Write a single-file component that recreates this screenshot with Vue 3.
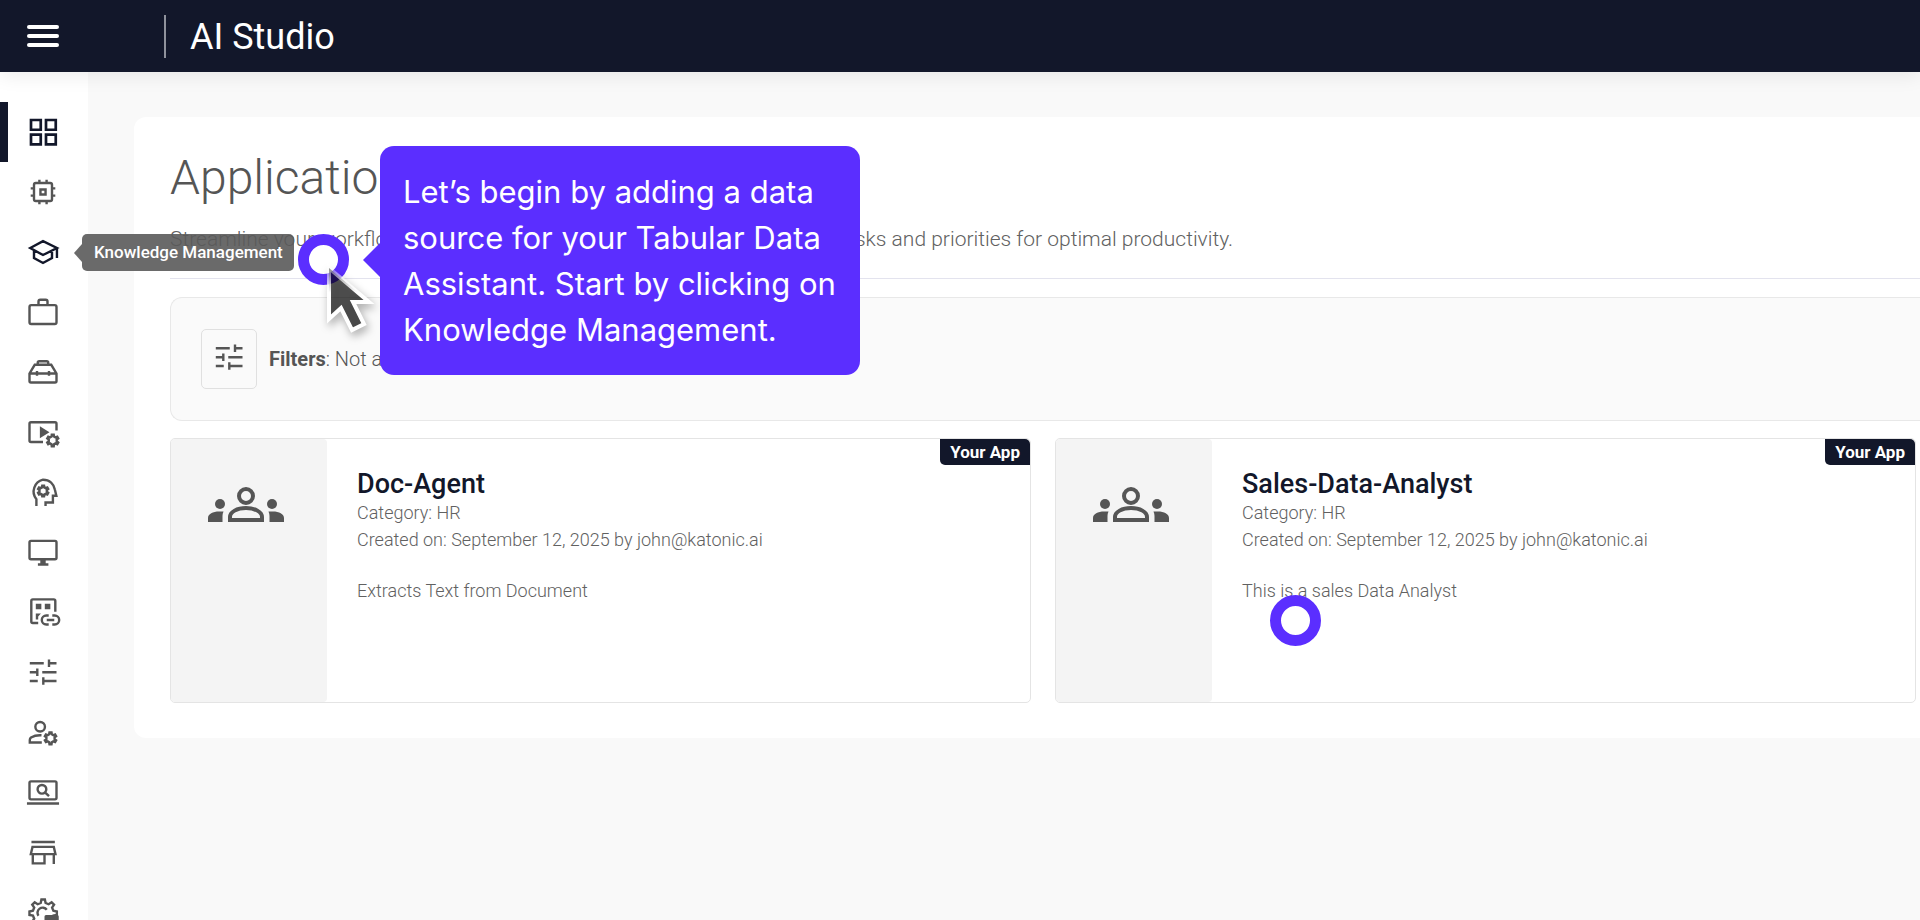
<template>
  <div class="shell">
    <header class="topbar">
      <button class="menu-btn" type="button" aria-label="Menu">
        <span></span>
        <span></span>
        <span></span>
      </button>
      <div class="brand">AI Studio</div>
    </header>

    <div class="body">
      <nav class="sidebar" aria-label="Main">
        <a
          v-for="item in navItems"
          :key="item.label"
          href="#"
          class="nav-item"
          :class="{ active: item.active, hovered: item.hovered }"
          :aria-label="item.label"
        >
          <svg class="nav-icon" viewBox="0 0 24 24">
            <path class="line" :d="item.line" />
            <path v-if="item.solid" class="solid" :d="item.solid" />
          </svg>
          <span v-if="item.hovered" class="tooltip">{{ item.label }}</span>
        </a>
      </nav>

      <main class="content">
        <section class="panel">
          <div class="panel-head">
            <h1>Applications</h1>
            <p>
              Streamline your workflow by efficiently managing and organizing
              all your tasks and priorities for optimal productivity.
            </p>
          </div>

          <div class="filters">
            <button class="filter-btn" type="button" aria-label="Filters">
              <svg class="filter-icon" viewBox="0 0 24 24">
                <path class="line" :d="tuneIcon" />
              </svg>
            </button>
            <span><b>Filters</b>: Not applied</span>
          </div>

          <div class="cards">
            <article v-for="app in apps" :key="app.name" class="card">
              <div class="thumb">
                <svg class="people" viewBox="0 0 76 36">
                  <circle class="ring-line" cx="38" cy="9" r="7" />
                  <path
                    class="ring-line"
                    d="M22 33v-3c0-5 7-9 16-9s16 4 16 9v3z"
                  />
                  <circle cx="12" cy="17" r="5" />
                  <circle cx="64" cy="17" r="5" />
                  <path d="M0 35v-4c0-4 5-6.500 11-6.500h4.500c-.7 1.500-1 3-1 4.500v6z" />
                  <path d="M76 35v-4c0-4-5-6.500-11-6.500h-4.500c.7 1.500 1 3 1 4.500v6z" />
                </svg>
              </div>
              <div class="card-body">
                <h2>{{ app.name }}</h2>
                <p>Category: {{ app.category }}</p>
                <p>Created on: {{ app.created }} by {{ app.author }}</p>
                <p class="desc">{{ app.description }}</p>
              </div>
              <span class="badge">Your App</span>
            </article>
          </div>
        </section>
      </main>
    </div>

    <!-- Guided tour -->
    <div class="hotspot hotspot-nav"></div>
    <div class="hotspot hotspot-card"></div>
    <svg class="cursor" viewBox="0 0 60 90">
      <defs>
        <linearGradient id="edge" x1="0" y1="0" x2="0" y2="1">
          <stop offset="0" stop-color="#fff" stop-opacity="0.3" />
          <stop offset="0.4" stop-color="#fff" />
        </linearGradient>
      </defs>
      <path
        d="M9 10v51l12-11 11 22 12-6-11-22h16z"
        fill="#000"
        fill-opacity="0.62"
        stroke="url(#edge)"
        stroke-width="4"
      />
    </svg>
    <div class="bubble" role="dialog" aria-label="Tour step">
      Let’s begin by adding a data source for your Tabular Data Assistant. Start
      by clicking on Knowledge Management.
    </div>
  </div>
</template>

<script setup>
// outline of a cog: each tooth is a flat top between two valley points
const cog = (cx, cy, outer, inner, teeth) => {
  const step = (Math.PI * 2) / teeth;
  const points = [];
  for (let i = 0; i < teeth; i++) {
    const mid = i * step - Math.PI / 2;
    [
      [-0.3, inner],
      [-0.16, outer],
      [0.16, outer],
      [0.3, inner],
    ].forEach(([turn, r]) => {
      const a = mid + turn * step;
      points.push(
        `${(cx + Math.cos(a) * r).toFixed(2)} ${(cy + Math.sin(a) * r).toFixed(2)}`
      );
    });
  }
  return `M${points.join("L")}z`;
};

const tuneIcon =
  "M3.200 6.200h9.300M16 3.700v5M16 6.200h5M3.200 12.200h5M8.200 9.700v5M11.500 12.200H21M3.200 18h5.300M12.200 15.500v5M12.200 18H21";

const navItems = [
  {
    label: "Applications",
    active: true,
    line: "M4 4h6.500v6.500H4zM14 4h6.500v6.500H14zM4 13.800h6.500v6.500H4zM14 13.800h6.500v6.500H14z",
  },
  {
    label: "Models",
    line: "M7.200 6h9.600q1.200 0 1.200 1.200v9.600q0 1.200-1.200 1.200H7.200Q6 18 6 16.800V7.200Q6 6 7.200 6zM10.300 10.300h3.400v3.400h-3.400zM9.600 3.800V6M14.400 3.800V6M9.600 18v2.200M14.400 18v2.200M3.800 9.600H6M3.800 14.400H6M18 9.600h2.200M18 14.400h2.200",
  },
  {
    label: "Knowledge Management",
    hovered: true,
    line: "M3.500 9.300L12 4.800l9.300 4.500L12 14zM6 11v5l6 3.300 6-3.300v-5M21.300 9.300V16",
  },
  {
    label: "Projects",
    line: "M4.200 7.400h15.600q1.200 0 1.200 1.200v10.200q0 1.200-1.200 1.200H4.200Q3 20 3 18.800V8.600q0-1.200 1.200-1.200zM9 7.400V5q0-1.200 1.200-1.200h3.600Q15 3.800 15 5v2.400",
  },
  {
    label: "Toolbox",
    line: "M6.500 7.200h11L21 13v5q0 1-1 1H4q-1 0-1-1v-5zM8.500 7.200V5.800q0-1 1-1h5q1 0 1 1v1.400M3 13h18M8 11.300v3.200M16 11.300v3.200",
  },
  {
    label: "Workflows",
    line: `M21 11V6.500q0-1-1-1H4q-1 0-1 1v11.200q0 1 1 1h8${cog(18.5, 17.600, 3.900, 2.700, 6)}`,
    solid: "M9.900 8.200v8l6.400-4z",
  },
  {
    label: "Intelligence",
    line: `M7.600 21.300v-4.500A8.100 8.100 0 0 1 12 3.800c4.600 0 7.200 3 7.900 6.600l1 4.100h-2.300V19h-4.900v2.300${cog(12.1, 11.300, 3.600, 2.500, 6)}`,
  },
  {
    label: "Workspaces",
    line: "M4 4.600h16q1 0 1 1v10.200q0 1-1 1H4q-1 0-1-1V5.600q0-1 1-1zM8.600 20.300h7",
    solid: "M10.200 17h3.600v3.500h-3.600z",
  },
  {
    label: "Connectors",
    line: "M8.800 19.300H5.200q-1 0-1-1V4.600q0-1 1-1h14q1 0 1 1v7.200M15.800 14.300h-1.600a3 3 0 0 0 0 6h1.600M18.200 14.300h1.600a3 3 0 0 1 0 6h-1.600M14.500 17.300h5",
    solid: "M7.200 6.500h3.700v3.700H7.200zM13.200 6.500h3.700v3.700h-3.700zM7.200 13h3.400l-1.800 2v2H7.200z",
  },
  { label: "Settings", line: tuneIcon },
  {
    label: "User Management",
    line: `M13.300 8.500a3.200 3.200 0 1 1-6.400 0a3.200 3.200 0 1 1 6.400 0zM11 14.200c-3.300-.2-5.500.6-7 1.500q-.8.600-.8 1.600V19h8${cog(17, 16.200, 4, 2.800, 6)}`,
  },
  {
    label: "Monitoring",
    line: "M4 4.900h16q1 0 1 1v10q0 1-1 1H4q-1 0-1-1v-10q0-1 1-1zM1.300 19.700h21.400M14.200 10.200a2.900 2.900 0 1 1-5.800 0a2.900 2.900 0 1 1 5.800 0zM13.300 12.200l2.700 2.600",
  },
  {
    label: "Marketplace",
    line: "M4.300 5.300h15.600M5 8.600h14.200l1.100 4.800H3.900zM5.200 13.400v6.200h7.800v-6.200M19.200 13.400v6.600",
  },
  {
    label: "Administration",
    line: `${cog(12.1, 12.800, 9.200, 7, 8)}M9 14.500a3.300 3.300 0 0 1 5.500-4`,
    solid:
      "M14 14h7.500q1 0 1 1v8.500h-2.500v-5.500h-4v5.500H13V15q0-1 1-1z",
  },
];

const apps = [
  {
    name: "Doc-Agent",
    category: "HR",
    created: "September 12, 2025",
    author: "john@katonic.ai",
    description: "Extracts Text from Document",
  },
  {
    name: "Sales-Data-Analyst",
    category: "HR",
    created: "September 12, 2025",
    author: "john@katonic.ai",
    description: "This is a sales Data Analyst",
  },
];
</script>

<style>
body {
  margin: 0;
  background: #f9f9f9;
}
</style>

<style scoped>
.shell {
  position: relative;
  display: flex;
  flex-direction: column;
  height: 100vh;
  overflow: hidden;
  background: #f9f9f9;
  color: #555;
  font-family: Roboto, "Liberation Sans", sans-serif;
}

.topbar {
  position: relative;
  z-index: 1;
  display: flex;
  flex: none;
  align-items: center;
  height: 72px;
  padding-left: 27px;
  background: #12172a;
  box-shadow: 0 4px 18px rgba(0, 0, 0, 0.08);
}

.menu-btn {
  display: flex;
  flex-direction: column;
  gap: 5px;
  width: 32px;
  margin-right: 105px;
  padding: 0;
  border: 0;
  background: none;
}

.menu-btn span {
  height: 4px;
  border-radius: 2px;
  background: #fff;
}

.brand {
  padding: 1px 0 0 24px;
  border-left: 2px solid #8f929c;
  color: #fff;
  font-size: 36px;
  line-height: 42px;
}

.body {
  display: flex;
  flex: 1;
  min-height: 0;
}

/* Sidebar */

.sidebar {
  flex: none;
  width: 88px;
  padding-top: 30px;
  background: #fff;
}

.nav-item {
  position: relative;
  display: flex;
  align-items: center;
  height: 60px;
  padding-left: 25px;
  color: #555;
}

.nav-item.active,
.nav-item.hovered {
  color: #12172a;
}

.nav-item.active::before {
  content: "";
  position: absolute;
  inset: 0 auto 0 0;
  width: 8px;
  background: #12172a;
}

.nav-icon {
  width: 36px;
  height: 36px;
}

.line {
  fill: none;
  stroke: currentColor;
  stroke-width: 1.6;
}

.active .line {
  stroke-width: 1.8;
}

.solid {
  fill: currentColor;
}

.tooltip {
  position: absolute;
  z-index: 2;
  left: 82px;
  top: 12px;
  padding: 0 11px 0 12px;
  border-radius: 5px;
  background: rgba(90, 90, 90, 0.9);
  color: #fff;
  font-size: 17px;
  font-weight: 500;
  line-height: 37px;
  white-space: nowrap;
}

.tooltip::before {
  content: "";
  position: absolute;
  right: 100%;
  top: 10px;
  border: solid transparent;
  border-width: 9px 8px 9px 0;
  border-right-color: rgba(90, 90, 90, 0.9);
}

/* Main panel */

.content {
  flex: 1;
  min-width: 0;
  padding: 45px 0 0 46px;
}

.panel {
  padding: 33px 0 35px 36px;
  border-radius: 12px 0 0 12px;
  background: #fff;
}

.panel-head {
  margin-bottom: 18px;
  padding-bottom: 25px;
  border-bottom: 1px solid #e3e3ee;
}

h1 {
  margin: 0 0 19px;
  font-size: 48px;
  font-weight: 300;
  line-height: 56px;
}

.panel-head p {
  margin: 0;
  color: #616161;
  font-size: 21px;
  font-weight: 300;
  line-height: 28px;
  white-space: nowrap;
}

.filters {
  display: flex;
  align-items: center;
  gap: 12px;
  margin-bottom: 17px;
  padding: 31px 30px;
  border: 1px solid #e8e8e8;
  border-right: 0;
  border-radius: 12px 0 0 12px;
  background: #fafafa;
  font-size: 20px;
  font-weight: 300;
}

.filters b {
  font-weight: 700;
}

.filter-btn {
  display: flex;
  align-items: center;
  justify-content: center;
  width: 56px;
  height: 60px;
  padding: 0 0 4px;
  border: 1px solid #e0e0e0;
  border-radius: 5px;
  background: #fafafa;
  color: #555;
}

.filter-icon {
  width: 36px;
  height: 36px;
}

.cards {
  display: grid;
  grid-template-columns: 1fr 1fr;
  gap: 24px;
  padding-right: 4px;
}

.card {
  position: relative;
  display: flex;
  min-height: 263px;
  border: 1px solid #e4e4e4;
  border-radius: 5px;
  background: #fff;
}

.thumb {
  display: flex;
  flex: none;
  align-items: flex-start;
  justify-content: center;
  width: 156px;
  padding: 48px 6px 0 0;
  box-sizing: border-box;
  border-radius: 4px;
  background: #f4f4f4;
}

.people {
  width: 76px;
  height: 36px;
  fill: #555;
}

.ring-line {
  fill: none;
  stroke: #555;
  stroke-width: 4;
}

.card-body {
  padding: 30px;
}

.card-body h2 {
  margin: 0;
  color: #12172a;
  font-size: 27px;
  font-weight: 500;
  line-height: 30px;
}

.card-body p {
  margin: 0;
  color: #616161;
  font-size: 18px;
  font-weight: 300;
  line-height: 27px;
}

.card-body .desc {
  margin-top: 24px;
}

.badge {
  position: absolute;
  top: 0;
  right: 0;
  padding: 0 10px;
  border-radius: 0 5px 0 5px;
  background: #12172a;
  color: #fff;
  font-size: 17px;
  font-weight: 700;
  line-height: 26px;
}

/* Tour overlay */

.hotspot {
  position: absolute;
  z-index: 3;
  width: 29px;
  height: 29px;
  border: 11px solid #5b2eff;
  border-radius: 50%;
  background: #fff;
}

.hotspot-nav {
  left: 298px;
  top: 234px;
}

.hotspot-card {
  left: 1270px;
  top: 595px;
}

.cursor {
  position: absolute;
  z-index: 4;
  left: 320px;
  top: 258px;
  width: 60px;
  height: 90px;
  filter: drop-shadow(2px 4px 4px rgba(0, 0, 0, 0.35));
}

.bubble {
  position: absolute;
  z-index: 5;
  left: 380px;
  top: 146px;
  width: 480px;
  box-sizing: border-box;
  padding: 23px 16px 22px 23px;
  border-radius: 14px;
  background: #5b2eff;
  color: #fff;
  font-family: Inter, "Liberation Sans", sans-serif;
  font-size: 31px;
  line-height: 46px;
}

.bubble::before {
  content: "";
  position: absolute;
  right: 100%;
  top: 97px;
  border: solid transparent;
  border-width: 17px 17px 17px 0;
  border-right-color: #5b2eff;
}
</style>
